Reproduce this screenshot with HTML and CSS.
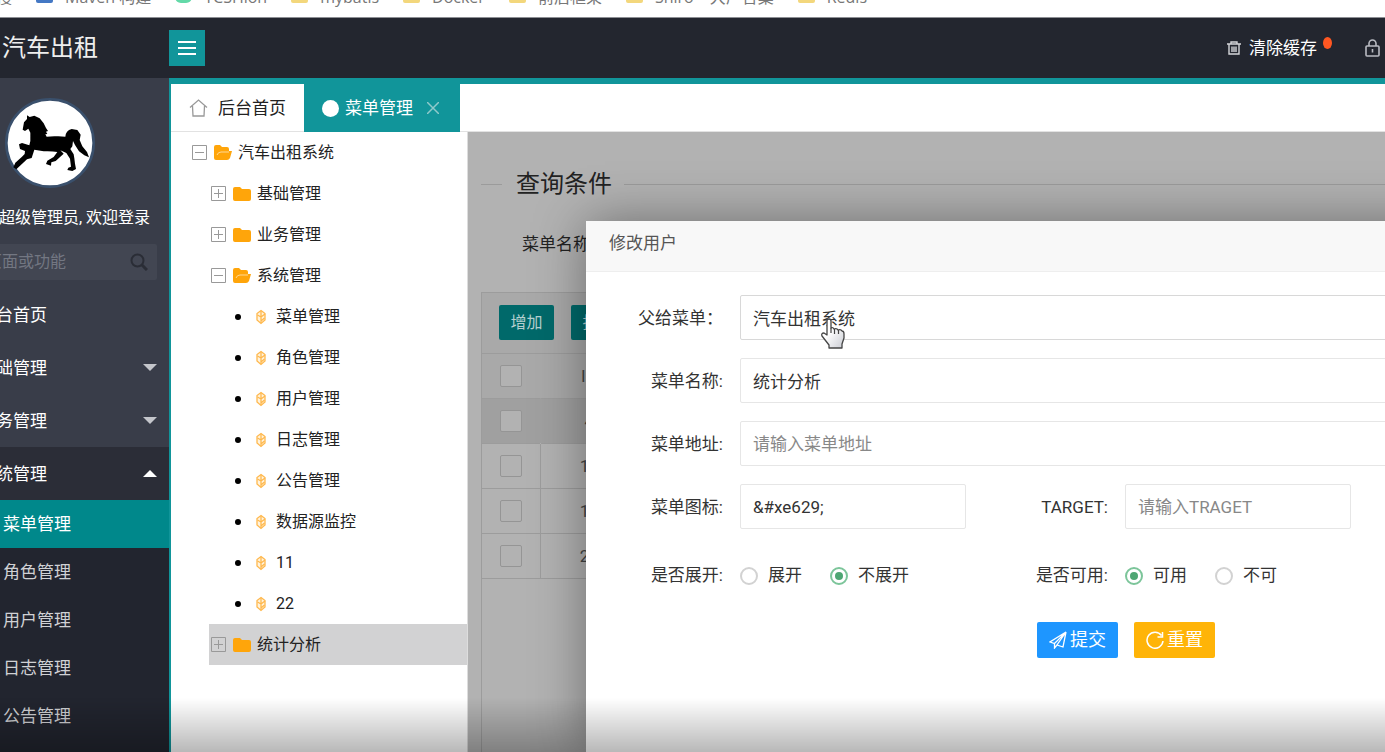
FILE: index.html
```html
<!DOCTYPE html>
<html lang="zh-CN">
<head>
<meta charset="utf-8">
<meta name="viewport" content="width=device-width, initial-scale=1">
<title>汽车出租</title>
<link rel="stylesheet" href="styles.css">
</head>
<body>
<svg class="sprite" aria-hidden="true">
  <symbol id="folder" viewBox="0 0 18 16"><path fill="#ffa50a" d="M2 1h5l2 2h7q2 0 2 2v8q0 2-2 2H2q-2 0-2-2V3q0-2 2-2z"/></symbol>
  <symbol id="folder-open" viewBox="0 0 18 16"><path fill="#ffa50a" d="M2 0h4l2 2h5q2 0 2 2v2h3L16 13q-1 2-3 2H2q-2 0-2-2V2q0-2 2-2z"/><path fill="none" stroke="#ffd894" stroke-width="1" d="M3 10q1-3 4-3h8"/></symbol>
  <symbol id="leaf" viewBox="0 0 18 16"><path fill="#fff3dd" stroke="#ffb84d" stroke-width="1.300" d="M9 1.500l4 3v6.500l-4 3.500-4-3.500V4.500z"/><path fill="none" stroke="#ffb84d" stroke-width="1.300" d="M9 2v12M9 8l4-3M9 8L5.500 6M9 12l3.500-3"/></symbol>
  <symbol id="minus" viewBox="0 0 15 15"><path fill="none" stroke="#999" d="M.5.5h14v14H.5zM3 7.500h9"/></symbol>
  <symbol id="plus" viewBox="0 0 15 15"><path fill="none" stroke="#999" d="M.5.5h14v14H.5zM3 7.500h9M7.500 3v9"/></symbol>
</svg>

<nav class="bookmarks" aria-label="书签">
  <span class="mark mark-first">搜</span>
  <span class="mark"><i class="fav fav-blue"></i>Maven 构建</span>
  <span class="mark"><i class="fav fav-green"></i>TCSHion</span>
  <span class="mark"><i class="fav"></i>mybatis</span>
  <span class="mark"><i class="fav"></i>Docker</span>
  <span class="mark"><i class="fav"></i>前后框架</span>
  <span class="mark"><i class="fav"></i>Shiro　大厂合集</span>
  <span class="mark"><i class="fav"></i>Redis</span>
</nav>

<header class="topbar">
  <div class="brand">汽车出租</div>
  <button class="burger" type="button" aria-label="折叠菜单">
    <svg width="18" height="16" viewBox="0 0 18 16"><path stroke="#fff" stroke-width="2" d="M0 2h18M0 8h18M0 14h18"/></svg>
  </button>
  <div class="tools">
    <button class="tool" type="button">
      <svg width="14" height="14" viewBox="0 0 14 14" fill="none" stroke="#d5d6da" stroke-width="1.400"><path d="M0 3h14M4 2.500V1h6v1.500M2 3.500V13h10V3.500M5 5.500v5.500M7 5.500v5.500M9 5.500v5.500"/></svg>
      清除缓存
      <i class="dot"></i>
    </button>
    <button class="tool" type="button" aria-label="锁屏">
      <svg width="15" height="18" viewBox="0 0 15 18" fill="none" stroke="#b9bbc2" stroke-width="1.600"><rect x="1" y="7" width="13" height="10" rx="1"/><path d="M4 7V4.500a3.500 3.500 0 0 1 7 0V7M7.500 10v3.500"/></svg>
    </button>
  </div>
</header>

<div class="app">
  <aside class="sidebar">
    <div class="side-inner">
      <svg class="avatar" viewBox="0 0 270 270" role="img" aria-label="头像">
        <circle cx="135" cy="135" r="131" fill="#fff" stroke="#3a506c" stroke-width="8"/>
        <path d="M53 95L57 73 66 63 66 52 74 57 88 53 104 61 116 76 123 90 129 99 123 101 127 108 121 109 125 116Q142 114 160 115L181 116Q182 98 200 93L217 96 227 110 224 126 232 145 246 162 252 178 238 172 222 160 210 141 204 129 202 145 196 153 206 169 208 181 210 197 213 213 202 219 187 216 190 209 198 206 195 182 184 165 166 157 176 167 152 189 139 193 138 203 123 198 127 188 146 177 157 162Q141 159 116 160L88 155 80 180 66 184 34 214 25 208 31 194 51 176 59 168 60 159 45 153 42 139 51 135 73 142 76 129 76 104 70 92 60 99z"/>
      </svg>
      <p class="welcome">超级管理员, 欢迎登录</p>
      <label class="search">
        <input type="text" placeholder="搜索页面或功能" aria-label="搜索页面或功能">
        <svg width="18" height="18" viewBox="0 0 18 18" fill="none" stroke="#2a2d36" stroke-width="2"><circle cx="7.500" cy="7.500" r="6"/><path d="M12 12l5 5" stroke-width="3"/></svg>
      </label>
      <ul class="menu">
        <li><a class="item" href="#">后台首页</a></li>
        <li><a class="item" href="#">基础管理<i class="caret"></i></a></li>
        <li><a class="item" href="#">业务管理<i class="caret"></i></a></li>
        <li>
          <a class="item item-open" href="#">系统管理<i class="caret caret-up"></i></a>
          <ul class="submenu">
            <li><a class="active" href="#">菜单管理</a></li>
            <li><a href="#">角色管理</a></li>
            <li><a href="#">用户管理</a></li>
            <li><a href="#">日志管理</a></li>
            <li><a href="#">公告管理</a></li>
          </ul>
        </li>
      </ul>
    </div>
  </aside>

  <main class="main">
    <div class="tabs">
      <button class="tab tab-home" type="button">
        <svg width="19" height="18" viewBox="0 0 19 18" fill="none" stroke="#999" stroke-width="1.300"><path d="M1 8.500L9.500 1 18 8.500M3.500 7L4 17h11l.5-10"/></svg>
        后台首页
      </button>
      <button class="tab tab-current" type="button">
        <i class="disc"></i>
        菜单管理
        <svg class="close" width="12" height="12" viewBox="0 0 12 12" stroke="#8fc9cb" stroke-width="1.500"><path d="M0 0l12 12M12 0L0 12"/></svg>
      </button>
    </div>

    <div class="workspace">
      <section class="tree-pane">
        <ul class="tree">
          <li>
            <div class="node"><svg class="toggle"><use href="#minus"/></svg><svg class="icon"><use href="#folder-open"/></svg>汽车出租系统</div>
            <ul>
              <li><div class="node"><svg class="toggle"><use href="#plus"/></svg><svg class="icon"><use href="#folder"/></svg>基础管理</div></li>
              <li><div class="node"><svg class="toggle"><use href="#plus"/></svg><svg class="icon"><use href="#folder"/></svg>业务管理</div></li>
              <li>
                <div class="node"><svg class="toggle"><use href="#minus"/></svg><svg class="icon"><use href="#folder-open"/></svg>系统管理</div>
                <ul>
                  <li><div class="node"><i class="bullet"></i><svg class="icon"><use href="#leaf"/></svg>菜单管理</div></li>
                  <li><div class="node"><i class="bullet"></i><svg class="icon"><use href="#leaf"/></svg>角色管理</div></li>
                  <li><div class="node"><i class="bullet"></i><svg class="icon"><use href="#leaf"/></svg>用户管理</div></li>
                  <li><div class="node"><i class="bullet"></i><svg class="icon"><use href="#leaf"/></svg>日志管理</div></li>
                  <li><div class="node"><i class="bullet"></i><svg class="icon"><use href="#leaf"/></svg>公告管理</div></li>
                  <li><div class="node"><i class="bullet"></i><svg class="icon"><use href="#leaf"/></svg>数据源监控</div></li>
                  <li><div class="node"><i class="bullet"></i><svg class="icon"><use href="#leaf"/></svg>11</div></li>
                  <li><div class="node"><i class="bullet"></i><svg class="icon"><use href="#leaf"/></svg>22</div></li>
                </ul>
              </li>
              <li><div class="node selected"><svg class="toggle"><use href="#plus"/></svg><svg class="icon"><use href="#folder"/></svg>统计分析</div></li>
            </ul>
          </li>
        </ul>
      </section>

      <section class="content">
        <fieldset class="query">
          <legend>查询条件</legend>
          <span class="query-label">菜单名称</span>
        </fieldset>
        <div class="grid">
          <div class="grid-bar">
            <button class="add" type="button">增加</button>
            <button class="add" type="button">批量</button>
          </div>
          <table>
            <thead><tr class="head"><th class="pick"><input type="checkbox" aria-label="全选"></th><th class="num">ID</th><th></th></tr></thead>
            <tbody>
              <tr class="hover"><td class="pick"><input type="checkbox" aria-label="选择 4"></td><td class="num">4</td><td></td></tr>
              <tr><td class="pick"><input type="checkbox" aria-label="选择 10"></td><td class="num">10</td><td></td></tr>
              <tr><td class="pick"><input type="checkbox" aria-label="选择 11"></td><td class="num">11</td><td></td></tr>
              <tr><td class="pick"><input type="checkbox" aria-label="选择 22"></td><td class="num">22</td><td></td></tr>
            </tbody>
          </table>
        </div>

        <div class="dialog" role="dialog" aria-labelledby="dlg-title">
          <h2 class="dialog-title" id="dlg-title">修改用户</h2>
          <form class="form">
            <div class="row"><label class="label" for="parent">父给菜单：</label><input class="field field-wide field-strong" id="parent" type="text" value="汽车出租系统"></div>
            <div class="row"><label class="label" for="name">菜单名称:</label><input class="field field-wide" id="name" type="text" value="统计分析"></div>
            <div class="row"><label class="label" for="url">菜单地址:</label><input class="field field-wide" id="url" type="text" placeholder="请输入菜单地址"></div>
            <div class="row">
              <div class="cell"><label class="label" for="glyph">菜单图标:</label><input class="field" id="glyph" type="text" value="&amp;#xe629;"></div>
              <div class="cell"><label class="label" for="target">TARGET:</label><input class="field" id="target" type="text" placeholder="请输入TRAGET"></div>
            </div>
            <div class="row row-radio">
              <div class="cell" role="radiogroup" aria-label="是否展开">
                <span class="label">是否展开:</span>
                <label class="choice"><input type="radio" name="spread">展开</label>
                <label class="choice"><input type="radio" name="spread" checked>不展开</label>
              </div>
              <div class="cell" role="radiogroup" aria-label="是否可用">
                <span class="label">是否可用:</span>
                <label class="choice"><input type="radio" name="usable" checked>可用</label>
                <label class="choice"><input type="radio" name="usable">不可</label>
              </div>
            </div>
            <div class="actions">
              <button class="btn btn-submit" type="button"><svg width="18" height="18" viewBox="0 0 18 18" fill="none" stroke="#fff" stroke-width="1.300"><path d="M17 1L1 11l4.500 1.500L17 1 8 14l6 2L17 1M5.500 12.500V17L8 14"/></svg>提交</button>
              <button class="btn btn-reset" type="button"><svg width="18" height="18" viewBox="0 0 18 18" fill="none" stroke="#fff" stroke-width="1.500"><path d="M15.500 4.500A8 8 0 1 0 17 10M16.500 1v5h-5"/></svg>重置</button>
            </div>
          </form>
          <svg class="cursor" width="24" height="32" viewBox="0 0 24 32"><defs><linearGradient id="hand" x1="0" y1="0" x2="1" y2="1"><stop offset=".4" stop-color="#fff"/><stop offset="1" stop-color="#c9cbd2"/></linearGradient></defs><path fill="url(#hand)" stroke="#444" stroke-width="1.300" stroke-linejoin="round" d="M6 17V3q0-2 2-2t2 2v7q2-1 3 1 3-1 4 1 3-1 4 1 2 0 2 3v4l-2 6v4H8v-3L1 18q-1-3 2-3z"/><path stroke="#444" stroke-width="1.200" d="M10 10v5M13.500 11v5M17.500 12v4"/></svg>
        </div>
      </section>
    </div>
  </main>
</div>
<div class="fade"></div>
</body>
</html>
```
FILE: styles.css
```css
* { box-sizing: border-box; }

body {
  margin: 0;
  height: 100vh;
  display: flex;
  flex-direction: column;
  overflow: hidden;
  background: #fff;
  color: #333;
  font: 17px/24px Roboto, "Noto Sans CJK SC", sans-serif;
}

button, input { font: inherit; color: inherit; }
button { border: 0; padding: 0; background: none; }
ul { list-style: none; margin: 0; padding: 0; }
a { color: inherit; text-decoration: none; }
svg { flex: none; }
.sprite { position: absolute; width: 0; height: 0; }

/* Bookmarks strip */
.bookmarks {
  flex: none;
  height: 18px;
  padding-bottom: 14px;
  display: flex;
  align-items: flex-end;
  gap: 24px;
  overflow: hidden;
  border-bottom: 1px solid #8d8f94;
  color: #777;
  font: 16px/12px "Open Sans", "Noto Sans CJK SC", sans-serif;
}
.mark { display: flex; align-items: flex-end; gap: 12px; white-space: nowrap; }
.mark-first { width: 12px; justify-content: flex-end; }
.fav { width: 17px; height: 16px; border-radius: 2px; background: #f3d77c; }
.fav-blue { background: #4478c4; }
.fav-green { background: #63d9a8; border-radius: 6px; }

/* Header */
.topbar {
  flex: none;
  height: 60px;
  display: flex;
  align-items: center;
  background: #23262f;
  color: #fff;
}
.brand { width: 169px; padding-left: 2px; font-size: 24px; color: #eee; }
.burger { width: 36px; height: 36px; display: grid; place-items: center; background: #11959a; }
.tools { margin-left: auto; padding-right: 5px; display: flex; gap: 33px; }
.tool { display: flex; align-items: center; gap: 8px; }
.dot { width: 9px; height: 12px; margin-bottom: 10px; margin-left: -2px; border-radius: 50%; background: #ff5722; }

.app { flex: 1; min-height: 0; display: flex; }

/* Sidebar */
.sidebar { flex: none; width: 169px; overflow: hidden; background: #393d49; color: #fff; }
.side-inner { margin-left: -60px; display: flex; flex-direction: column; }
.avatar { width: 90px; height: 90px; margin: 20px 0 0 65px; }
.welcome { margin: 18px 19px 0 0; text-align: right; font-size: 16px; white-space: nowrap; }
.search {
  height: 36px;
  margin: 14px 12px 8px 4px;
  padding: 0 9px 0 10px;
  display: flex;
  align-items: center;
  border-radius: 2px;
  background: #424652;
}
.search input { flex: 1; min-width: 0; border: 0; padding: 0; background: none; font-size: 16px; }
.search input::placeholder { color: #737782; }
.item { height: 53px; padding: 0 12px 0 39px; display: flex; align-items: center; justify-content: space-between; }
.item-open { background: #2b2d37; }
.caret { border: 7px solid transparent; border-top-color: #c4c6cb; border-bottom-width: 0; }
.caret-up { border-top-width: 0; border-bottom: 7px solid #fff; }
.submenu { background: #22252f; height: 100vh; color: #d0d1d4; }
.submenu a { height: 48px; padding-left: 63px; display: flex; align-items: center; }
.submenu .active { background: #00888b; color: #fff; }

/* Tabs */
.main {
  flex: 1;
  min-width: 0;
  display: flex;
  flex-direction: column;
  border-left: 2px solid #11959a;
  border-top: 6px solid #11959a;
}
.tabs { flex: none; height: 48px; display: flex; border-bottom: 1px solid #e2e2e2; }
.tab { height: 48px; display: flex; align-items: center; padding: 0 18px; }
.tab-home { gap: 10px; color: #222; }
.tab-current { gap: 6px; padding: 0 21px 0 18px; background: #11959a; color: #fff; }
.disc { width: 17px; height: 17px; border-radius: 50%; background: #fff; }
.close { margin-left: 8px; }

.workspace { flex: 1; min-height: 0; display: flex; }

/* Tree */
.tree-pane { flex: none; width: 297px; overflow: hidden; border-right: 1px solid #ddd; font-size: 16px; color: #222; }
.tree { padding-left: 19px; }
.tree ul { padding-left: 19px; }
.node { height: 41px; padding-left: 2px; display: flex; align-items: center; white-space: nowrap; }
.toggle { width: 15px; height: 15px; margin-right: 7px; }
.icon { width: 18px; height: 16px; margin-right: 6px; }
.bullet { width: 6px; height: 6px; margin: 0 11px 0 5px; border-radius: 50%; background: #000; }
.selected { background: #d2d2d3; }

/* Dimmed content page */
.content { position: relative; flex: 1; min-width: 0; display: flex; flex-direction: column; padding: 35px 0 0 13px; background: #b2b2b2; color: #222; }
.query { height: 125px; margin: 0; padding: 31px 0 0 41px; border: 0 solid #9b9b9b; border-top-width: 1px; }
.query legend { margin-left: -20px; padding: 0 12px 0 14px; font-size: 24px; line-height: 34px; }
.query-label { white-space: nowrap; }
.grid { flex: 1; border: 1px solid #9c9c9c; border-right: 0; border-bottom: 0; }
.grid-bar { height: 61px; padding: 12px 17px; display: flex; gap: 17px; background: #a9a9a9; border-bottom: 1px solid #9c9c9c; }
.add { width: 55px; height: 35px; border-radius: 2px; background: #00696a; color: #b4cfcf; font-size: 16px; }
.grid table { width: 100%; border-collapse: collapse; table-layout: fixed; }
.grid tr { height: 45px; border-bottom: 1px solid #9c9c9c; }
.grid .head { height: 44px; background: #a9a9a9; }
.grid .hover { background: #a0a0a0; }
.grid th { font-weight: 400; }
.grid th, .grid td { padding: 0; }
.pick { width: 58px; }
.grid td.pick { border-right: 1px solid #9c9c9c; }
.grid .hover td.pick { border-right-color: transparent; }
.num { width: 98px; text-align: center; color: #444; }
.pick input { appearance: none; display: block; width: 22px; height: 22px; margin: 0 auto; border: 1px solid #959595; border-radius: 2px; background: #b2b2b2; }

/* Dialog over the content page */
.dialog { position: absolute; top: 89px; left: 118px; right: -60px; bottom: 0; background: #fff; box-shadow: 1px 1px 50px rgba(0, 0, 0, .4); color: #333; }
.dialog-title { height: 51px; margin: 0; padding: 10px 23px; background: #f8f8f8; border-bottom: 1px solid #eee; font-size: 17px; line-height: 24px; font-weight: 400; color: #555; }
.form { padding-top: 23px; display: flex; flex-direction: column; gap: 18px; }
.row { height: 45px; display: flex; align-items: center; }
.cell { width: 385px; display: flex; align-items: center; }
.label { width: 154px; padding-right: 17px; flex: none; text-align: right; white-space: nowrap; }
.field { width: 226px; height: 45px; padding: 0 12px; border: 1px solid #e6e6e6; border-radius: 2px; background: #fff; outline: 0; }
.field::placeholder { color: #888; }
.field-wide { flex: 1; width: auto; }
.field-strong { border-color: #d8d8d8; }
.choice { width: 90px; display: flex; align-items: center; gap: 10px; white-space: nowrap; }
.choice input { appearance: none; flex: none; width: 18px; height: 18px; margin: 2px 0 0; border: 2px solid #d2d2d2; border-radius: 50%; display: grid; place-items: center; }
.choice input:checked { border-color: #7cc59a; }
.choice input:checked::before { content: ""; width: 8px; height: 8px; border-radius: 50%; background: #4ea673; }
.row-radio { margin-top: 5px; }
.actions { display: flex; gap: 16px; padding-left: 451px; margin-top: 7px; }
.btn { height: 36px; padding: 0 12px; display: flex; align-items: center; gap: 3px; border-radius: 2px; color: #fff; line-height: 36px; font-size: 18px; }
.btn-submit { background: #1e96ff; }
.btn-reset { background: #ffb408; }
.cursor { position: absolute; left: 235px; top: 97px; }

/* Darkened lower edge */
.fade { position: fixed; left: 0; right: 0; bottom: 0; height: 54px; background: linear-gradient(rgba(0, 0, 0, 0), rgba(0, 0, 0, .28)); pointer-events: none; }
```
